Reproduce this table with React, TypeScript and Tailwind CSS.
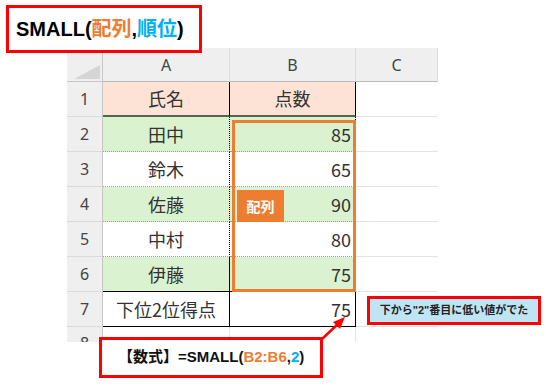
import React from "react";

const JP = "font-['Noto_Sans_CJK_JP','Noto_Sans',sans-serif]";
const BOLD = "font-['Liberation_Sans','Noto_Sans_CJK_JP',sans-serif] font-bold";

const ROWS = [
  { n: 1, a: "氏名", b: "点数", kind: "head" },
  { n: 2, a: "田中", b: "85", kind: "green" },
  { n: 3, a: "鈴木", b: "65", kind: "white" },
  { n: 4, a: "佐藤", b: "90", kind: "green" },
  { n: 5, a: "中村", b: "80", kind: "white" },
  { n: 6, a: "伊藤", b: "75", kind: "green" },
  { n: 7, a: "下位2位得点", b: "75", kind: "total" },
];

function rowLine(n: number) {
  if (n === 1) return "border-b-2 border-b-[#56634f]";
  if (n >= 2 && n <= 5) return "border-b border-dotted border-b-[#9c9c9c]";
  return "border-b border-b-black";
}

function rowBg(kind: string) {
  if (kind === "head") return "bg-[#fce3d6]";
  if (kind === "green") return "bg-[#daf2d0]";
  return "bg-white";
}

export default function App() {
  return (
    <div className={`relative w-[546px] h-[386px] bg-white overflow-hidden ${JP}`}>
      {/* Sheet */}
      <div className="ml-[67px] mt-[48px] w-[371px] h-[294px] overflow-hidden grid grid-cols-[36px_127px_126px_82px] grid-rows-[34px_repeat(8,35px)] text-[#333]">
        {/* column headers */}
        <div className="bg-[#efefef] border-r border-b border-[#c6c6c6] flex items-end justify-end p-[2px]">
          <svg width="26" height="14" viewBox="0 0 26 14"><polygon points="26,0 26,14 0,14" fill="#d5d5d5" /></svg>
        </div>
        {["A", "B", "C"].map((c) => (
          <div key={c} className="bg-[#efefef] border-r border-r-[#dcdcdc] border-b border-b-[#b9b9b9] flex items-center justify-center text-[16px] text-[#444] font-['Noto_Sans',sans-serif]">
            {c}
          </div>
        ))}

        {ROWS.map((r) => (
          <React.Fragment key={r.n}>
            <div className="bg-[#efefef] border-r border-r-[#c6c6c6] border-b border-b-[#dadada] flex items-center justify-center text-[16px] text-[#444] font-['Noto_Sans',sans-serif]">
              {r.n}
            </div>
            <div className={`${rowBg(r.kind)} ${rowLine(r.n)} border-r border-r-black flex items-center justify-center text-[18px]`}>
              {r.a}
            </div>
            <div className={`${rowBg(r.kind)} ${rowLine(r.n)} border-r border-r-black flex items-center ${r.kind === "head" ? "justify-center" : "justify-end pr-[4px]"} text-[18px]`}>
              {r.b}
            </div>
            <div className="border-b border-b-[#e3e3e3] bg-white" />
          </React.Fragment>
        ))}

        {/* row 8 */}
        <div className="bg-[#efefef] border-r border-r-[#c6c6c6] flex items-start justify-center pt-[4px] text-[16px] text-[#444] font-['Noto_Sans',sans-serif]">8</div>
        <div className="border-r border-r-[#e3e3e3]" />
        <div className="border-r border-r-[#e3e3e3]" />
        <div />
      </div>

      {/* orange range */}
      <div className="absolute left-[232px] top-[120px] w-[124px] h-[172px] border-[3px] border-[#ed7d31]" />
      <div className="absolute left-[237px] top-[190px] w-[47px] h-[32px] bg-[#ed7d31] text-white text-[14px] font-bold flex items-center justify-center">
        配列
      </div>

      {/* title */}
      <div className={`absolute left-[6px] top-[5px] w-[196px] h-[48px] border-[3px] border-[#ff0000] bg-white flex items-center pl-[7px] text-[20px] text-black ${BOLD}`}>
        SMALL(<span className="text-[#ed7d31]">配列</span>,<span className="text-[#00b0f0]">順位</span>)
      </div>

      {/* formula */}
      <div className={`absolute left-[99px] top-[337px] w-[224px] h-[41px] border-[3px] border-[#ff0000] bg-white flex items-center pl-[16px] text-[15px] text-[#111] ${BOLD}`}>
        【数式】=SMALL(<span className="text-[#ed7d31]">B2:B6</span>,<span className="text-[#00b0f0]">2</span>)
      </div>

      {/* arrow */}
      <svg className="absolute left-0 top-0" width="546" height="386">
        <line x1="322" y1="339" x2="339" y2="323" stroke="#ff0000" strokeWidth="2.5" />
        <polygon points="345,317 333,322 340,329" fill="#ff0000" />
      </svg>

      {/* callout */}
      <div className={`absolute left-[367px] top-[296px] w-[174px] h-[29px] border-[3px] border-[#ff0000] bg-[#bfe4f4] flex items-center justify-center text-[11px] text-[#222] ${BOLD}`}>
        下から"2"番目に低い値がでた
      </div>
    </div>
  );
}
